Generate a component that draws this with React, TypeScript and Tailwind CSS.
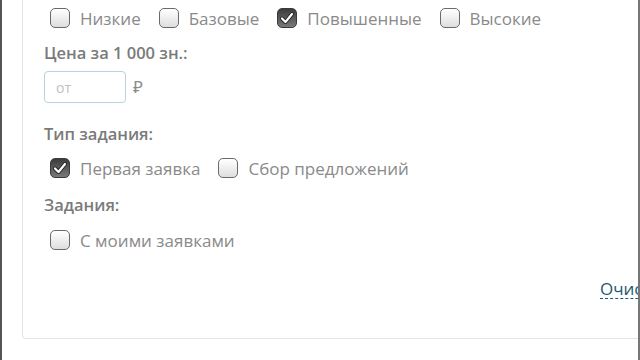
import React from "react";

function Box({ checked }: { checked?: boolean }) {
  if (checked) {
    return (
      <span className="relative flex h-[20px] w-[20px] shrink-0 items-center justify-center rounded-[5px] border-[1.5px] border-[#3a3a3a] bg-gradient-to-b from-[#3c3c3c] to-[#7a7a7a]">
        <svg width="16" height="16" viewBox="0 0 16 16">
          <path d="M3 8.5 L6.5 12 L13 4" fill="none" stroke="#222" strokeWidth="4" strokeLinecap="round" strokeLinejoin="round" />
          <path d="M3 8.5 L6.5 12 L13 4" fill="none" stroke="#fff" strokeWidth="2.2" strokeLinecap="round" strokeLinejoin="round" />
        </svg>
      </span>
    );
  }
  return (
    <span className="h-[20px] w-[20px] shrink-0 rounded-[5px] border-[1.5px] border-[#6a6a6a] bg-gradient-to-b from-[#ffffff] to-[#dedede]" />
  );
}

function Opt({ label, checked }: { label: string; checked?: boolean }) {
  return (
    <div className="flex items-center gap-[10px]">
      <Box checked={checked} />
      <span className="text-[17px] leading-none text-[#8a8a8a]">{label}</span>
    </div>
  );
}

export default function App() {
  return (
    <div
      className="flex h-[360px] w-[640px] overflow-hidden bg-white"
      style={{ fontFamily: '"Open Sans", "Noto Sans", sans-serif' }}
    >
      <div className="w-[2px] shrink-0 bg-[#555]" />
      <div className="flex-1 overflow-hidden pl-[20px]">
        <div className="h-[339px] w-[700px] rounded-bl-[4px] border-b border-l border-[#e4e4e4] pl-[27px]">
          <div className="flex h-[36px] items-center gap-[18px]">
            <Opt label="Низкие" />
            <Opt label="Базовые" />
            <Opt label="Повышенные" checked />
            <Opt label="Высокие" />
          </div>
          <div className="-ml-[6px] flex h-[34px] items-center">
            <span className="text-[16.5px] font-semibold leading-none text-[#7a7a7a]">Цена за 1 000 зн.:</span>
          </div>
          <div className="-ml-[6px] mt-[1px] flex h-[32px] items-center gap-[7px]">
            <div className="flex h-[32px] w-[82px] items-center rounded-[4px] border border-[#b9d3dd] pl-[11px]">
              <span className="text-[14px] text-[#c0c0c0]">от</span>
            </div>
            <span className="text-[17px] text-[#8a8a8a]">₽</span>
          </div>
          <div className="-ml-[6px] mt-[20px] flex h-[22px] items-center">
            <span className="text-[16.5px] font-semibold leading-none text-[#7a7a7a]">Тип задания:</span>
          </div>
          <div className="mt-[11px] flex h-[24px] items-center gap-[18px]">
            <Opt label="Первая заявка" checked />
            <Opt label="Сбор предложений" />
          </div>
          <div className="-ml-[6px] mt-[14px] flex h-[22px] items-center">
            <span className="text-[16.5px] font-semibold leading-none text-[#7a7a7a]">Задания:</span>
          </div>
          <div className="mt-[12px] flex h-[24px] items-center">
            <Opt label="С моими заявками" />
          </div>
          <div className="mt-[26px] flex h-[22px] items-center pl-[550px]">
            <span className="border-b border-dashed border-[#1e5a6e] text-[17px] leading-[18px] text-[#1e5a6e]">Очистить</span>
          </div>
        </div>
      </div>
      <div className="w-[2px] shrink-0 bg-[#777]" />
    </div>
  );
}
